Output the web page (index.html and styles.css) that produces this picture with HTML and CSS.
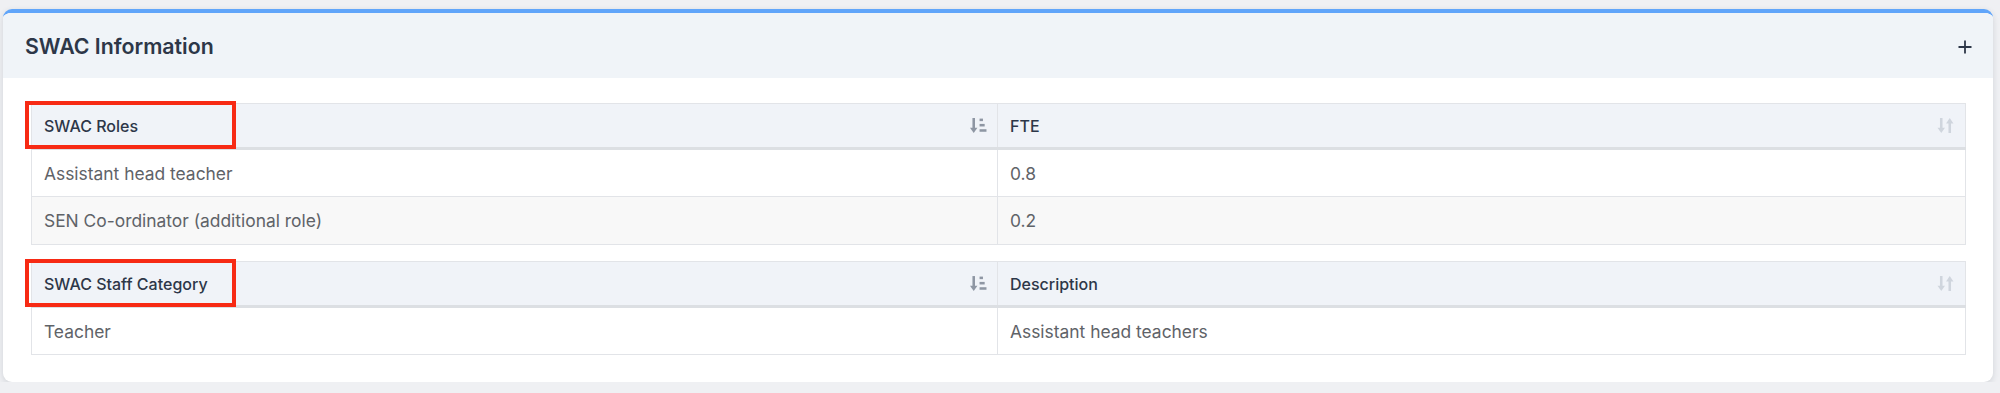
FILE: index.html
```html
<!DOCTYPE html>
<html lang="en">
<head>
<meta charset="utf-8">
<title>SWAC Information</title>
<link rel="stylesheet" href="styles.css">
</head>
<body>
<section class="card">
  <header class="card-header">
    <h2 class="card-title">SWAC Information</h2>
    <svg class="plus" viewBox="0 0 14 14" width="14" height="14"><path d="M7 0.5v13M0.5 7h13" stroke="#2d3748" stroke-width="1.8" fill="none"/></svg>
  </header>
  <div class="card-body">
    <table class="grid">
      <colgroup><col class="c1"><col class="c2"></colgroup>
      <thead>
        <tr>
          <th><div class="th-in"><span>SWAC Roles</span>
            <svg class="sort-act" viewBox="0 0 16 16" width="17" height="17"><path d="M3.5 1v10" stroke="currentColor" stroke-width="2.4" fill="none"/><path d="M0 10h7l-3.5 5z" fill="currentColor"/><rect x="9" y="1.5" width="3.2" height="2.4" fill="currentColor"/><rect x="9" y="6.5" width="4.8" height="2.4" fill="currentColor"/><rect x="9" y="11.5" width="6.5" height="2.4" fill="currentColor"/></svg>
          </div><span class="mark"></span></th>
          <th><div class="th-in"><span>FTE</span>
            <svg class="sort-idle" viewBox="0 0 16 16" width="17" height="17"><path d="M4 1v10" stroke="currentColor" stroke-width="2.4" fill="none"/><path d="M0.5 10h7l-3.5 5z" fill="currentColor"/><path d="M12 5v10" stroke="currentColor" stroke-width="2.4" fill="none"/><path d="M8.5 6h7l-3.5-5z" fill="currentColor"/></svg>
          </div></th>
        </tr>
      </thead>
      <tbody>
        <tr><td>Assistant head teacher</td><td>0.8</td></tr>
        <tr class="alt"><td>SEN Co-ordinator (additional role)</td><td>0.2</td></tr>
      </tbody>
    </table>
    <table class="grid second">
      <colgroup><col class="c1"><col class="c2"></colgroup>
      <thead>
        <tr>
          <th><div class="th-in"><span>SWAC Staff Category</span>
            <svg class="sort-act" viewBox="0 0 16 16" width="17" height="17"><path d="M3.5 1v10" stroke="currentColor" stroke-width="2.4" fill="none"/><path d="M0 10h7l-3.5 5z" fill="currentColor"/><rect x="9" y="1.5" width="3.2" height="2.4" fill="currentColor"/><rect x="9" y="6.5" width="4.8" height="2.4" fill="currentColor"/><rect x="9" y="11.5" width="6.5" height="2.4" fill="currentColor"/></svg>
          </div><span class="mark"></span></th>
          <th><div class="th-in"><span>Description</span>
            <svg class="sort-idle" viewBox="0 0 16 16" width="17" height="17"><path d="M4 1v10" stroke="currentColor" stroke-width="2.4" fill="none"/><path d="M0.5 10h7l-3.5 5z" fill="currentColor"/><path d="M12 5v10" stroke="currentColor" stroke-width="2.4" fill="none"/><path d="M8.5 6h7l-3.5-5z" fill="currentColor"/></svg>
          </div></th>
        </tr>
      </thead>
      <tbody>
        <tr><td>Teacher</td><td>Assistant head teachers</td></tr>
      </tbody>
    </table>
  </div>
</section>
</body>
</html>
```
FILE: styles.css
```css
* { box-sizing: border-box; }
html, body { margin: 0; padding: 0; }
body {
  background: #eff0f3;
  font-family: Inter, "Noto Sans", "Liberation Sans", sans-serif;
  padding: 9px 7px 0 3px;
}
.card {
  background: #fff;
  border-top: 4px solid #60a5fa;
  border-radius: 9px;
  box-shadow: 0 2px 6px rgba(30, 40, 60, 0.14);
  overflow: hidden;
  height: 373px;
}
.card-header {
  height: 65px;
  background: #f0f4f8;
  display: flex;
  align-items: center;
  justify-content: space-between;
  padding: 0 21px 0 22px;
}
.card-title {
  margin: 0;
  font-size: 21.3px;
  font-weight: 600;
  color: #2d3748;
}
.plus { display: block; margin-top: 2px; }
.card-body {
  padding: 25px 27px 0 28px;
}
.grid {
  width: 100%;
  border-collapse: collapse;
  border: 1px solid #e2e4e8;
  table-layout: fixed;
}
.grid.second { margin-top: 16px; }
.c1 { width: 966px; }
.grid th {
  position: relative;
  background: #f0f3f8;
  height: 45px;
  padding: 0 10px 0 12px;
  text-align: left;
  font-size: 16px;
  font-weight: 500;
  color: #2d3748;
  border-bottom: 3px solid #dcdfe3;
  border-right: 1px solid #e2e4e8;
}
.grid th:last-child { padding-right: 11px; }
.th-in {
  display: flex;
  align-items: center;
  justify-content: space-between;
}
.sort-act { color: #8e96a3; display: block; }
.sort-idle { color: #cfd5dd; display: block; }
.mark {
  position: absolute;
  left: -7px;
  top: -3px;
  width: 211px;
  height: 48px;
  border: 4.5px solid #f72a14;
  pointer-events: none;
}
.grid td {
  height: 48px;
  padding: 0 12px;
  font-size: 17.4px;
  color: #5f6368;
  border-bottom: 1px solid #e2e4e8;
  border-right: 1px solid #e2e4e8;
}
.grid tr.alt td { background: #f8f8f8; }
```
